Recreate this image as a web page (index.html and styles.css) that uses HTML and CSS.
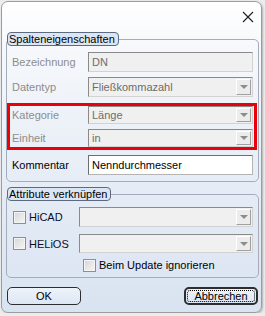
FILE: index.html
```html
<!DOCTYPE html>
<html lang="de">
<head>
  <meta charset="UTF-8" />
  <title>Spalteneigenschaften</title>
  <link rel="stylesheet" href="styles.css">
</head>
<body>
  <div class="window">
    <div class="titlebar">
      <svg class="close" width="12" height="12" viewBox="0 0 12 12">
        <path d="M1 1 L11 11 M11 1 L1 11" stroke="#1f1f1f" stroke-width="1.1" fill="none" />
      </svg>
    </div>

    <div class="content">
      <fieldset class="group props">
        <legend>Spalteneigenschaften</legend>

        <div class="row first disabled">
          <span class="label">Bezeichnung</span>
          <div class="field">DN</div>
        </div>
        <div class="row disabled">
          <span class="label">Datentyp</span>
          <div class="field combo">Fließkommazahl<span class="drop"></span></div>
        </div>

        <div class="highlight">
          <div class="row small disabled">
            <span class="label">Kategorie</span>
            <div class="field combo">Länge<span class="drop"></span></div>
          </div>
          <div class="row small disabled">
            <span class="label">Einheit</span>
            <div class="field combo">in<span class="drop"></span></div>
          </div>
        </div>

        <div class="row">
          <span class="label">Kommentar</span>
          <div class="field edit">Nenndurchmesser</div>
        </div>
      </fieldset>

      <fieldset class="group links">
        <legend>Attribute verknüpfen</legend>

        <div class="row first">
          <span class="check"></span>
          <span class="check-label">HiCAD</span>
          <div class="field combo wide"><span class="drop"></span></div>
        </div>
        <div class="row second">
          <span class="check"></span>
          <span class="check-label">HELiOS</span>
          <div class="field combo wide"><span class="drop"></span></div>
        </div>
        <div class="row option">
          <span class="check"></span>
          <span class="check-label">Beim Update ignorieren</span>
        </div>
      </fieldset>

      <div class="buttons">
        <button class="btn">OK</button>
        <button class="btn default"><span>Abbrechen</span></button>
      </div>
    </div>
  </div>
</body>
</html>
```

FILE: styles.css
```css
*, *::before, *::after {
  box-sizing: border-box;
}

body {
  margin: 0;
  background: #ececec;
  font-family: "Liberation Sans", Arial, sans-serif;
  font-size: 11px;
  color: #000;
}

/* Fenster */
.window {
  margin: 1px 0 0 1px;
  width: 261px;
  height: 312px;
  border: 1px solid #9c9c9c;
  border-radius: 7px;
  background: linear-gradient(180deg, #ffffff 0px, #f6f8fb 45px, #e9eff7 150px, #d9e3f1 310px);
  box-shadow: 1px 1px 2px rgba(0, 0, 0, 0.25);
  overflow: hidden;
}

.titlebar {
  height: 30px;
  display: flex;
  justify-content: flex-end;
  align-items: center;
  padding-right: 7px;
}

.close {
  display: block;
}

.content {
  padding: 0 2px 0 4px;
}

/* Gruppen */
.group {
  margin: 0;
  padding: 0 0 6px 0;
  width: 253px;
  border: 1px solid #a3acba;
  border-radius: 5px;
}

.group legend {
  padding: 0 3px 0 1px;
  height: 14px;
  line-height: 12px;
  border: 1px solid #5b6a80;
  border-radius: 4px;
  background: #dbe5f4;
  color: #000;
  font-size: 11px;
}

.links {
  margin-top: 5px;
  padding-bottom: 5px;
}

/* Zeilen */
.row {
  display: flex;
  align-items: center;
  height: 20px;
  margin-top: 5px;
  padding-left: 5px;
}

.row.first {
  margin-top: 6px;
}

.row.small {
  height: 18px;
}

.label {
  width: 76px;
  white-space: nowrap;
}

.disabled .label {
  color: #8d8d8d;
}

.field {
  position: relative;
  width: 165px;
  height: 100%;
  padding: 0 3px;
  display: flex;
  align-items: center;
  border: 1px solid;
  border-color: #8a8a8a #d2d2d2 #d2d2d2 #8a8a8a;
  background: #f0f0f0;
  color: #6d6d6d;
  white-space: nowrap;
}

.field.edit {
  background: #fff;
  color: #000;
  border-color: #6e6e6e #b4b4b4 #b4b4b4 #6e6e6e;
}

.field.wide {
  width: 174px;
}

.drop {
  position: absolute;
  top: 1px;
  right: 1px;
  bottom: 1px;
  width: 15px;
  border: 1px solid;
  border-color: #ffffff #a0a0a0 #a0a0a0 #ffffff;
  background: #ececec;
}

.drop::after {
  content: "";
  position: absolute;
  left: 3px;
  top: 50%;
  margin-top: -2px;
  border-left: 4px solid transparent;
  border-right: 4px solid transparent;
  border-top: 4px solid #8c8c8c;
}

/* Markierung */
.highlight {
  margin: 6px 1px 0 0;
  padding: 0 1px 0 2px;
  border: 3px solid #e8000b;
}

.highlight .row {
  padding-left: 0;
}

.highlight .row:first-child {
  margin-top: 0;
}

/* Checkboxen */
.check {
  width: 13px;
  height: 13px;
  margin-left: 1px;
  border: 1px solid #8f8f8f;
  background: linear-gradient(135deg, #d6d6d6, #f7f7f7);
  box-shadow: inset 0 0 0 1px #f4f4f4;
}

.check-label {
  margin-left: 3px;
  width: 50px;
  color: #0d0d28;
}

.row.second {
  margin-top: 7px;
  height: 19px;
}

.row.option {
  height: 14px;
  margin-top: 5px;
  padding-left: 75px;
}

.option .check-label {
  width: auto;
  color: #000;
}

/* Buttons */
.buttons {
  display: flex;
  justify-content: space-between;
  margin-top: 9px;
  padding: 0 1px;
}

.btn {
  width: 74px;
  height: 18px;
  padding: 0;
  border: 1px solid #2d2d2d;
  border-radius: 5px;
  background: linear-gradient(180deg, #eef3fa, #dce6f3);
  font-family: "Liberation Sans", Arial, sans-serif;
  font-size: 11px;
  color: #000;
}

.btn.default {
  border-width: 2px;
  padding: 1px;
}

.btn.default span {
  display: block;
  height: 100%;
  line-height: 11px;
  border: 1px dotted #000;
  border-radius: 3px;
}
```
